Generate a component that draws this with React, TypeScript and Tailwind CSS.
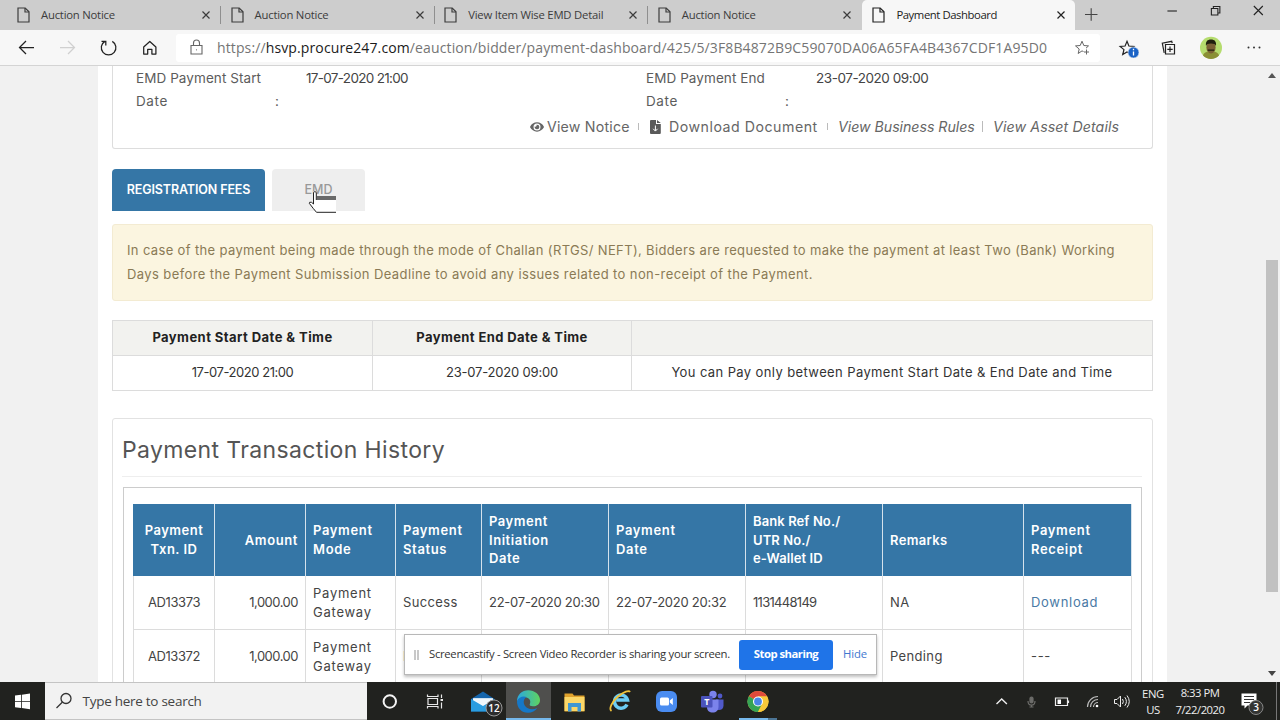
import { ReactNode } from "react"
import { FaEye } from "react-icons/fa"

const TABS = ["Auction Notice", "Auction Notice", "View Item Wise EMD Detail", "Auction Notice"]

const HEADERS = [
  { label: ["Payment", "Txn. ID"], cls: "items-center tracking-[0.5px]" },
  { label: ["Amount"], cls: "items-end tracking-[0.6px]" },
  { label: ["Payment", "Mode"], cls: "items-start tracking-[0.65px]" },
  { label: ["Payment", "Status"], cls: "items-start tracking-[0.65px]" },
  { label: ["Payment", "Initiation", "Date"], cls: "items-start tracking-[0.55px]" },
  { label: ["Payment", "Date"], cls: "items-start tracking-[0.65px]" },
  { label: ["Bank Ref No./", "UTR No./", "e-Wallet ID"], cls: "items-start tracking-[0.1px]" },
  { label: ["Remarks"], cls: "items-start tracking-[0.35px]" },
  { label: ["Payment", "Receipt"], cls: "items-start tracking-[0.65px]" },
]

const CELLS = [
  "justify-center tracking-[-0.4px]",
  "justify-end tracking-[-0.5px]",
  "tracking-[0.75px]",
  "tracking-[0.35px]",
  "tracking-[-0.25px]",
  "tracking-[-0.25px]",
  "tracking-[-0.7px]",
  "tracking-[0.35px]",
  "tracking-[0.7px]",
]

const ROWS = [
  ["AD13373", "1,000.00", "Payment Gateway", "Success", "22-07-2020 20:30", "22-07-2020 20:32", "1131448149", "NA", "Download"],
  ["AD13372", "1,000.00", "Payment Gateway", "P", "", "", "", "Pending", "---"],
]

const COLS = "grid grid-cols-[81px_91px_90px_86px_127px_137px_137px_141px_108px]"

function PageIcon() {
  return (
    <svg width="13" height="16" viewBox="0 0 13 16" fill="none" stroke="currentColor" strokeWidth="1.2" className="shrink-0">
      <path d="M1 1h7.2L12 4.8V15H1z" />
      <path d="M8 1v4h4" />
    </svg>
  )
}

function Cross() {
  return (
    <svg width="8" height="8" viewBox="0 0 8 8" stroke="currentColor" strokeWidth="1.2" className="shrink-0">
      <path d="M.5.5l7 7M7.5.5l-7 7" />
    </svg>
  )
}

function TabStrip() {
  return (
    <div className="flex h-[30px] bg-[#cdcdcd] text-[#3c3c3c]">
      <div className="flex pl-2">
        {TABS.map((title, i) => (
          <div key={i} className="flex h-[30px] w-[213.6px] items-center pl-[9px]">
            <PageIcon />
            <span className="ml-[11px] w-[161px] text-[11.3px] tracking-[-0.22px] whitespace-nowrap">{title}</span>
            <Cross />
            <span className={i < 3 ? "ml-[10px] h-[18px] w-px bg-[#8f8f8f]" : "hidden"} />
          </div>
        ))}
      </div>
      <div className="flex h-[30px] w-[213px] items-center rounded-t-[5px] bg-[#f7f7f7] pl-[10px] text-[#222]">
        <PageIcon />
        <span className="ml-[11px] w-[161px] text-[11.3px] tracking-[-0.42px] whitespace-nowrap">Payment Dashboard</span>
        <Cross />
      </div>
      <svg width="205" height="30" viewBox="1075 0 205 30" fill="none" stroke="#222" strokeWidth="1.1">
        <path d="M1085 14.5h12.5M1091.2 8.300v12.500" stroke="#444" />
        <path d="M1167.500 11h9.500" />
        <path d="M1211.500 8.500h6.500v6.500h-6.500zM1213.500 8.500v-2h6.500v6.500h-2" />
        <path d="M1254 6l9 9M1263 6l-9 9" />
      </svg>
    </div>
  )
}

const STAR = "M8 1.300l1.900 4.700 5 .4-3.850 3.250 1.200 4.900L8 11.900l-4.250 2.650 1.200-4.900L1.100 6.400l5-.4z"

function Toolbar() {
  return (
    <div className="flex h-[36px] items-center border-b border-[#d4d4d4] bg-[#f7f7f7] text-[#222]">
      <svg width="176" height="35" viewBox="0 30 176 35" fill="none" stroke="#222" strokeWidth="1.25">
        <path d="M34 47.500H19.500M26 41l-6.500 6.500 6.500 6.500" />
        <path d="M60 47.500h14.500M68 41l6.500 6.500-6.500 6.500" stroke="#d0d0d0" />
        <path d="M112.300 41.400a7.300 7.300 0 1 1-7.400 0M101.500 41.300h4.300v4.200" />
        <path d="M143.700 47l6.100-5.500 6.100 5.500v7h-4v-4.700h-4.200V54h-4z" strokeLinejoin="round" />
      </svg>
      <div className="flex h-[28px] w-[924px] items-center rounded-[3px] bg-white">
        <svg width="13" height="17" viewBox="0 0 13 17" fill="none" stroke="#666" strokeWidth="1.1" className="ml-[14px]">
          <path d="M1 6.500h11v8.500H1zM3.500 6.500V4a3 3 0 0 1 6 0v2.500" />
          <circle cx="6.500" cy="10.800" r=".6" fill="#666" stroke="none" />
        </svg>
        <span className="ml-[14px] w-[857px] text-[14px] tracking-[0.12px] whitespace-nowrap text-[#757575]">
          https://<span className="text-[#1b1b1b]">hsvp.procure247.com</span>/eauction/bidder/payment-dashboard/425/5/3F8B4872B9C59070DA06A65FA4B4367CDF1A95D0
        </span>
        <svg width="16" height="16" viewBox="0 0 16 16" fill="none" stroke="#666" strokeWidth="1">
          <path d="M9.500 11.500L8 10.900l-3.800 2.600 1-4.500L1.500 5.900l4.700-.4L8 1.200l1.800 4.300 4.700.4-2.500 2.300M10 12h5M12.500 9.500v5" />
        </svg>
      </div>
      <svg width="180" height="35" viewBox="1100 30 180 35" fill="none" stroke="#222" strokeWidth="1.2">
        <g transform="translate(1119 40)">
          <path d={STAR} />
        </g>
        <circle cx="1133.500" cy="52.500" r="5.500" fill="#1a63c6" stroke="#f7f7f7" strokeWidth=".6" />
        <path d="M1133.500 51.500v4M1133.500 48.800v1.400" stroke="#fff" strokeWidth="1.300" />
        <path d="M1165.500 44.500h9v9.500h-9zM1167.300 49.300h5.400M1170 46.600v5.400" />
        <path d="M1164.200 52.800l-1.900-9.600 9.400-1.900.5 1.900" />
        <g stroke="none">
          <circle cx="1211" cy="47.800" r="11" fill="#b5dc6e" />
          <path d="M1203 55.500c1-3.500 4-4 8-4s7 .5 8 4a11 11 0 0 1-16 0z" fill="#8a8f35" />
          <ellipse cx="1211" cy="47.500" rx="4.600" ry="6" fill="#7a6035" />
          <path d="M1206 46c-.6-4.500 1.500-6.500 5-6.500s5.600 2 5 6.500c-.8-1.800-2-2.500-5-2.500s-4.200.7-5 2.500zM1207.800 49.500h6.400v1.200h-6.400z" fill="#20200f" />
          <g fill="#333">
            <circle cx="1248.500" cy="47.500" r="1" />
            <circle cx="1254" cy="47.500" r="1" />
            <circle cx="1259.500" cy="47.500" r="1" />
          </g>
        </g>
      </svg>
    </div>
  )
}

function DateField({ label, children }: { label: string; children: ReactNode }) {
  return (
    <div className="flex w-[510px] shrink-0 text-[13.5px] leading-[23.4px]">
      <div className="w-[139px] text-[#5c5c5c]">
        <span className="tracking-[0.08px] whitespace-nowrap">{label}</span>
        <br />
        <span className="tracking-[0.6px]">Date</span>
      </div>
      <div className="w-[31px] pt-[23px]">:</div>
      <div className="whitespace-nowrap text-[#444]">{children}</div>
    </div>
  )
}

function NoticePanel() {
  return (
    <div className="h-[83px] overflow-hidden rounded-b-[3px] border-x border-b border-[#ddd] text-[#5c5c5c]">
      <div className="flex pt-px pl-[23px]">
        <DateField label="EMD Payment Start"><span className="tracking-[-0.69px]">17-07-2020 21:00</span></DateField>
        <DateField label="EMD Payment End"><span className="tracking-[-0.45px]">23-07-2020 09:00</span></DateField>
      </div>
      <div className="flex h-[26px] items-center pl-[417px] text-[14.2px] whitespace-nowrap text-[#666]">
        <FaEye className="mr-[3px] size-[14px]" />
        <span className="w-[91px] tracking-[0.2px]">View Notice</span>
        <span className="mr-[11px] h-[7px] w-px bg-[#bbb]" />
        <svg width="11" height="14" viewBox="0 0 11 14" fill="#5a5a5a">
          <path d="M1 0h5v4h4.800v9a1 1 0 0 1-1 1H1a1 1 0 0 1-1-1V1a1 1 0 0 1 1-1zM7 0l3.800 3H7z" />
          <path d="M5.400 5.500v5.300M3.200 8.800l2.200 2.300 2.200-2.300" stroke="#fff" fill="none" />
        </svg>
        <span className="ml-[8px] w-[158px] tracking-[0.5px]">Download Document</span>
        <span className="mr-[10px] h-[7px] w-px bg-[#bbb]" />
        <span className="w-[144px] tracking-[-0.04px] italic">View Business Rules</span>
        <span className="mr-[10px] h-[11px] w-px bg-[#bbb]" />
        <span className="tracking-[0.1px] italic">View Asset Details</span>
      </div>
    </div>
  )
}

function Cell({ children, className = "" }: { children?: ReactNode; className?: string }) {
  return <div className={`flex items-center justify-center border-r border-b border-[#dcdcdc] ${className}`}>{children}</div>
}

function PaymentWindow() {
  return (
    <div className="mt-[19px] grid h-[71px] grid-cols-[260px_259px_521px] grid-rows-[35px_35px] border-t border-l border-[#dcdcdc] text-[13px] whitespace-nowrap text-[#333]">
      <Cell className="bg-[#f2f2ef] font-bold tracking-[0.44px] text-[#222]">Payment Start Date &amp; Time</Cell>
      <Cell className="bg-[#f2f2ef] font-bold tracking-[0.4px] text-[#222]">Payment End Date &amp; Time</Cell>
      <Cell className="bg-[#f2f2ef]" />
      <Cell className="tracking-[-0.45px]">17-07-2020 21:00</Cell>
      <Cell className="tracking-[-0.2px]">23-07-2020 09:00</Cell>
      <Cell className="tracking-[0.39px]">You can Pay only between Payment Start Date &amp; End Date and Time</Cell>
    </div>
  )
}

function History() {
  return (
    <div className="mt-[27px] h-[300px] rounded-[3px] border border-[#e2e2e2] px-[10px]">
      <h2 className="-ml-px h-[58px] border-b border-[#eee] pt-[13px] text-[23px] leading-[36px] tracking-[0.37px] text-[#555]">
        Payment Transaction History
      </h2>
      <div className="mt-[10px] h-[260px] border border-[#ccc] px-[9px] pt-[16px]">
        <div className={`${COLS} h-[72px] w-[999px] border-l border-[#3576a6] bg-[#3576a6]`}>
          {HEADERS.map((h, i) => (
            <div key={i} className={`flex flex-col justify-center border-r border-[#d5e2ec] px-[7px] text-[13px] leading-[18.7px] font-semibold text-white ${h.cls}`}>
              {h.label.map((line) => (
                <span key={line} className="whitespace-nowrap">{line}</span>
              ))}
            </div>
          ))}
        </div>
        {ROWS.map((row, r) => (
          <div key={r} className={`${COLS} h-[54px] w-[999px] border-l border-[#dcdcdc] text-[13px] leading-[18.7px] text-[#444]`}>
            {row.map((text, i) => (
              <div
                key={i}
                className={`flex items-center border-r border-b border-[#dcdcdc] px-[7px] ${CELLS[i]} ${text === "Download" ? "text-[#4a7aa5]" : ""}`}
              >
                <span className={i === 2 ? "w-[64px]" : "whitespace-nowrap"}>{text}</span>
              </div>
            ))}
          </div>
        ))}
      </div>
    </div>
  )
}

function HandCursor() {
  return (
    <svg width="28" height="24" viewBox="308 189 28 24" className="absolute top-[20px] left-[36px]">
      <path d="M313.500 191.500q1.500-1.500 2.800.5v5H336v15h-19.500l-3-4-4.500-5q.5-2 3-.7l1.500 1.500z" fill="#fff" />
      <path d="M313.500 204v-11.500q1.400-2 2.800 0v7.500M313.500 204l-2-1.700q-2.500-.6-2.200 1l4 5.200 3.200 3.800H336" fill="none" stroke="#222" strokeWidth="1" />
      <path d="M317 196h19v4h-19z" fill="#6a6a6a" />
    </svg>
  )
}

function SharingBar() {
  return (
    <div className="absolute top-[634px] left-[404px] flex h-[41px] w-[473px] items-center border border-[#b8b8b8] bg-white font-['Open_Sans',sans-serif] text-[11.3px] whitespace-nowrap text-[#333] shadow-[0_2px_3px_rgba(0,0,0,0.25)]">
      <span className="ml-[9px] h-[10px] w-[5px] border-x-2 border-[#c8c8c8]" />
      <span className="ml-[10px] w-[310px] tracking-[-0.3px]">Screencastify - Screen Video Recorder is sharing your screen.</span>
      <span className="flex h-[30px] w-[94px] items-center justify-center rounded-[3px] bg-[#1f74e8] font-bold tracking-[-0.5px] text-white">Stop sharing</span>
      <span className="ml-[10px] tracking-[-0.1px] text-[#3f78d0]">Hide</span>
    </div>
  )
}

function TaskApps() {
  return (
    <svg width="420" height="38" viewBox="367 682 420 38" fill="none">
      <defs>
        <linearGradient id="edge" x1="0" y1="0" x2="1" y2="0">
          <stop offset="0" stopColor="#2aa8e0" />
          <stop offset="1" stopColor="#5fd45e" />
        </linearGradient>
      </defs>
      <circle cx="389.800" cy="701.500" r="6.200" stroke="#f4f4f4" strokeWidth="2" />
      <g stroke="#e8e8e8" strokeWidth="1.200">
        <path d="M428 698.500h9.500v6H428zM427.500 694.500v2h10.500v-2M427.500 708.500v-2h10.500v2M441.500 694.500v3.500M441.500 702.500v6" />
        <path d="M440.500 700h2.500" strokeWidth="2" />
      </g>

      {/* mail */}
      <path d="M471 699l12-7.500 11.500 7.500v12.500H471z" fill="#1565ac" />
      <path d="M473 698.300h20v8h-20z" fill="#f3f8fc" />
      <path d="M471 699l12 7 11.500-7v12.500H471z" fill="#2a9de0" />
      <path d="M473 698.500h20l-10 6.500z" fill="#eef6fb" />
      <circle cx="494" cy="708" r="8" fill="#2c2d2d" stroke="#999" />
      <text x="494" y="711.800" textAnchor="middle" fill="#fff" fontSize="10" fontWeight="600" fontFamily="Open Sans">12</text>

      {/* edge */}
      <path d="M506 682h45v38h-45z" fill="#4f4f4d" />
      <path d="M517 701.500c0-7 5-11.300 11.300-11.300S540 694.500 540 700c0 4-3 6.300-7 6.300-2.500 0-3.800-1-3.200-2.300 1-2 .8-5.500-3.300-6.500-4-.8-8 1-9.500 4z" fill="url(#edge)" />
      <path d="M517 701.500c1.500-4.500 6-6 9.500-4.600-3 1.800-3.600 5.600-1.600 8.800 2.300 3.500 7.500 4.500 12.400 2.300-2 3.200-5.500 4.800-9.300 4.800-6.500 0-11-4.800-11-11.300z" fill="#1678c8" />
      <path d="M506 718h45v2h-45z" fill="#76b9ed" />

      {/* explorer */}
      <path d="M564.500 693.500h8l1.500 2h10.500v16h-20z" fill="#e0a22c" />
      <path d="M564.500 697h20v14h-20z" fill="#fbd768" />
      <path d="M568 703h13v8.500h-3.500v-4.500h-6v4.500H568z" fill="#3f97d3" />

      {/* internet explorer */}
      <path d="M627 704.500a6.600 6.600 0 1 1 .5-4.500h-11" stroke="#6ccdf5" strokeWidth="3.400" />
      <path d="M611.500 711c-3-2 .5-9.500 6.500-14.500s11-6.500 12-4.500" stroke="#f0c23a" strokeWidth="1.800" />

      {/* zoom */}
      <rect x="656" y="691" width="21" height="21" rx="6" fill="#4a8cf0" />
      <rect x="660" y="697.500" width="9" height="8" rx="1.500" fill="#fff" />
      <path d="M669.800 700.500l3-2.500v7l-3-2.500z" fill="#fff" />

      {/* teams */}
      <circle cx="713" cy="694.500" r="3.700" fill="#7b83eb" />
      <circle cx="720" cy="696" r="2.400" fill="#5059c9" />
      <path d="M716 699.500h7.500v6c0 3-2 4.500-4.500 4.500h-3z" fill="#5059c9" />
      <path d="M707 699.500h11.500v7c0 4-2.500 6-5.800 6s-5.700-2-5.700-5z" fill="#7b83eb" />
      <rect x="701" y="696" width="11.500" height="11.500" rx="1" fill="#4b53bc" />
      <text x="706.800" y="705.300" textAnchor="middle" fill="#fff" fontSize="9" fontWeight="700" fontFamily="Open Sans">T</text>

      {/* chrome */}
      <circle cx="758" cy="701.500" r="10.500" fill="#f8c83a" />
      <path d="M758 701.500L748.900 696.200a10.500 10.500 0 0 1 18.200 0z" fill="#e04a3c" />
      <path d="M758 701.500l-9.100-5.300A10.500 10.500 0 0 0 758 712l4.500-8z" fill="#35a455" />
      <path d="M767.100 696.200H758v5.300l4 2.500-4 8a10.500 10.500 0 0 0 9.100-15.800z" fill="#f8c83a" />
      <circle cx="758" cy="701.500" r="5" fill="#fff" />
      <circle cx="758" cy="701.500" r="3.900" fill="#4a86e8" />
      <path d="M739 718h29v2h-29z" fill="#76b9ed" />
      <path d="M768 718h9v2h-9z" fill="#4c7595" />
    </svg>
  )
}

function Taskbar() {
  return (
    <div className="flex h-[38px] bg-[#21221f] font-['Open_Sans',sans-serif]">
      <svg width="45" height="38" viewBox="0 682 45 38" fill="#fff">
        <path d="M15 695.600l6-.8v6.200h-6zM21.800 694.700l8.200-1.100v7.400h-8.200zM15 701.800h6v6.200l-6-.8zM21.800 701.800H30v7.400l-8.200-1.100z" />
      </svg>
      <div className="flex w-[322px] items-center border-y border-[#c4c4c4] bg-[#f2f2f2]">
        <svg width="18" height="18" viewBox="0 0 18 18" fill="none" stroke="#333" strokeWidth="1.300" className="ml-[10px]">
          <circle cx="11" cy="6.500" r="5" />
          <path d="M7.500 10L1.500 16" />
        </svg>
        <span className="ml-[9.500px] pt-px text-[13.5px] tracking-[-0.27px] whitespace-nowrap text-[#444]">Type here to search</span>
      </div>
      <TaskApps />
      <svg width="345" height="38" viewBox="787 682 345 38" fill="none" stroke="#eee" strokeWidth="1.200">
        <path d="M996.500 704l5.200-5 5.200 5" strokeWidth="1.400" />
        <g stroke="#6d6d6a">
          <rect x="1030" y="697" width="3" height="6" rx="1.500" fill="#6d6d6a" />
          <path d="M1028 701c0 5.500 7 5.500 7 0M1031.500 705v2M1029.500 707h4" />
        </g>
        <path d="M1055.500 698h12v7.500h-12zM1068.500 700.500v2.500" />
        <path d="M1057.500 699.500h3.500v4.500h-3.500z" fill="#fff" stroke="none" />
        <path d="M1087.500 707a10.500 10.500 0 0 1 10.500-10.500M1090.500 707a7.500 7.500 0 0 1 7.500-7.500M1093.500 707a4.500 4.500 0 0 1 4.500-4.500" stroke="#bbb" />
        <circle cx="1097" cy="706" r="1.300" fill="#fff" stroke="none" />
        <path d="M1114.500 699.500h2.500l3.500-3.500v11l-3.500-3.500h-2.500zM1122.500 699q1.700 2.500 0 5M1124.800 697.200q3.200 4.300 0 8.600M1127 695.500q4.500 6 0 12" strokeWidth="1" />
      </svg>
      <div className="flex w-[42px] flex-col items-center pt-[4px] text-[11.3px] leading-[16px] tracking-[-0.4px] text-[#eee]">
        <span>ENG</span>
        <span>US</span>
      </div>
      <div className="flex w-[52px] flex-col items-center pt-[3px] text-[11.3px] leading-[16.5px] tracking-[-0.5px] whitespace-nowrap text-[#eee]">
        <span>8:33 PM</span>
        <span>7/22/2020</span>
      </div>
      <svg width="54" height="38" viewBox="1226 682 54 38">
        <path d="M1241.500 693.500h15v12h-9l-3 3v-3h-3z" fill="#fff" />
        <path d="M1244 696.500h10M1244 699.500h10M1244 702.500h6" stroke="#333" />
        <circle cx="1256" cy="707.500" r="7" fill="#333432" stroke="#888" />
        <text x="1256" y="711.300" textAnchor="middle" fill="#fff" fontSize="10" fontWeight="600" fontFamily="Open Sans">3</text>
        <path d="M1276.500 682v38" stroke="#777" />
      </svg>
    </div>
  )
}

export default function App() {
  return (
    <div className="relative h-[720px] w-[1280px] overflow-hidden bg-[#f1f1f1]">
      <div className="font-['Open_Sans',sans-serif]">
        <TabStrip />
        <Toolbar />
      </div>
      <div className="flex h-[616px] overflow-hidden font-['Inter',sans-serif]">
        <main className="ml-[98px] w-[1069px] bg-white px-[14px]">
          <NoticePanel />
          <div className="mt-[20px] flex h-[42px] gap-[7px] text-[12.5px]">
            <div className="flex w-[153px] items-center justify-center rounded-t-[4px] bg-[#3576a6] font-semibold tracking-[-0.12px] whitespace-nowrap text-white">REGISTRATION FEES</div>
            <div className="relative flex w-[93px] items-center justify-center rounded-t-[4px] bg-[#eee] font-medium text-[#999]">
              EMD
              <HandCursor />
            </div>
          </div>
          <div className="mt-[13px] h-[77px] w-[1041px] rounded-[3px] border border-[#f3ebd2] bg-[#fbf5e0] px-[14px] pt-[14px] text-[13px] leading-[23.6px] whitespace-nowrap text-[#8a7a55]">
            <p className="tracking-[0.355px]">In case of the payment being made through the mode of Challan (RTGS/ NEFT), Bidders are requested to make the payment at least Two (Bank) Working</p>
            <p className="tracking-[0.4px]">Days before the Payment Submission Deadline to avoid any issues related to non-receipt of the Payment.</p>
          </div>
          <PaymentWindow />
          <History />
        </main>
        <div className="ml-auto flex h-[616px] w-[16px] flex-col items-center bg-[#f1f1f1]">
          <svg width="8" height="5" viewBox="0 0 8 5" className="mt-[7px]"><path d="M0 5l4-5 4 5z" fill="#555" /></svg>
          <div className="mt-[182px] h-[332px] w-[12px] bg-[#c1c1c1]" />
          <svg width="8" height="5" viewBox="0 0 8 5" className="mt-[79px]"><path d="M0 0l4 5 4-5z" fill="#444" /></svg>
        </div>
      </div>
      <Taskbar />
      <SharingBar />
    </div>
  )
}
